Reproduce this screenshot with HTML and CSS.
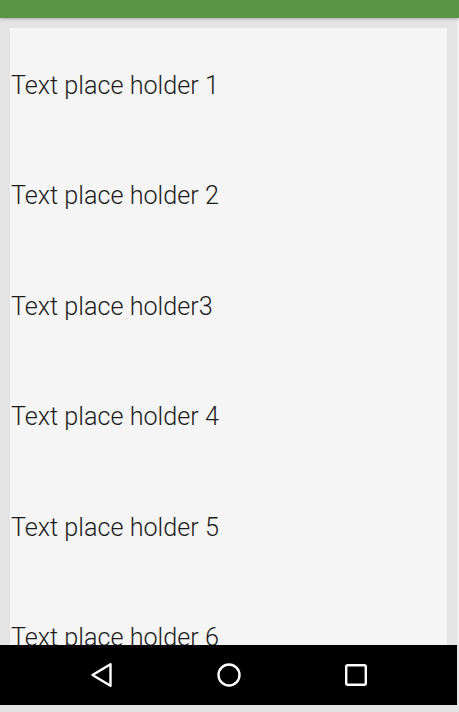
FILE: index.html
```html
<!DOCTYPE html>
<html>
<head>
<meta charset="utf-8">
<link rel="stylesheet" href="styles.css">
</head>
<body>
<div class="screen">
  <div class="appbar"></div>
  <div class="content">
    <div class="card">
      <div class="item">Text place holder 1</div>
      <div class="item">Text place holder 2</div>
      <div class="item">Text place holder3</div>
      <div class="item">Text place holder 4</div>
      <div class="item">Text place holder 5</div>
      <div class="item">Text place holder 6</div>
    </div>
  </div>
  <div class="navbar">
    <svg class="nav-icon" width="24" height="26" viewBox="0 0 24 26">
      <path d="M20.5 2.2 L2.5 13 L20.5 23.8 Z" fill="none" stroke="#fff" stroke-width="2.4" stroke-linejoin="round"/>
    </svg>
    <svg class="nav-icon" width="26" height="26" viewBox="0 0 26 26">
      <circle cx="13" cy="13" r="10.5" fill="none" stroke="#fff" stroke-width="2.4"/>
    </svg>
    <svg class="nav-icon" width="24" height="24" viewBox="0 0 24 24">
      <rect x="2.2" y="2.2" width="19.6" height="19.6" rx="1.5" fill="none" stroke="#fff" stroke-width="2.4"/>
    </svg>
  </div>
  <div class="bottom"></div>
</div>
</body>
</html>
```
FILE: styles.css
```css
html, body {
  margin: 0;
  padding: 0;
}
body {
  background: #e4e4e4;
  font-family: Roboto, "Noto Sans", sans-serif;
}
.screen {
  width: 459px;
  height: 712px;
  display: flex;
  flex-direction: column;
  overflow: hidden;
  background: #e4e4e4;
}
.appbar {
  height: 18px;
  flex: none;
  background: #5a9447;
  box-shadow: 0 1px 3px rgba(0,0,0,0.25);
  position: relative;
  z-index: 2;
}
.content {
  flex: 1;
  min-height: 0;
  padding: 10px 10px 0 10px;
  overflow: hidden;
  border-right: 2px solid #efefef;
}
.card {
  background: #f5f5f5;
  padding-top: 2px;
  height: 100%;
  overflow: hidden;
}
.item {
  height: 110.5px;
  display: flex;
  align-items: center;
  padding-left: 1px;
  font-size: 25.2px;
  font-weight: 300;
  color: #1c1c1c;
  white-space: nowrap;
}
.navbar {
  height: 60px;
  flex: none;
  background: #000;
  display: flex;
  align-items: center;
  padding-left: 90px;
  margin-right: 2px;
}
.nav-icon {
  display: block;
}
.navbar .nav-icon:nth-child(1) {
  margin-right: 102px;
}
.navbar .nav-icon:nth-child(2) {
  margin-right: 102px;
}
.bottom {
  height: 7px;
  flex: none;
  background: #e4e4e4;
}
```
